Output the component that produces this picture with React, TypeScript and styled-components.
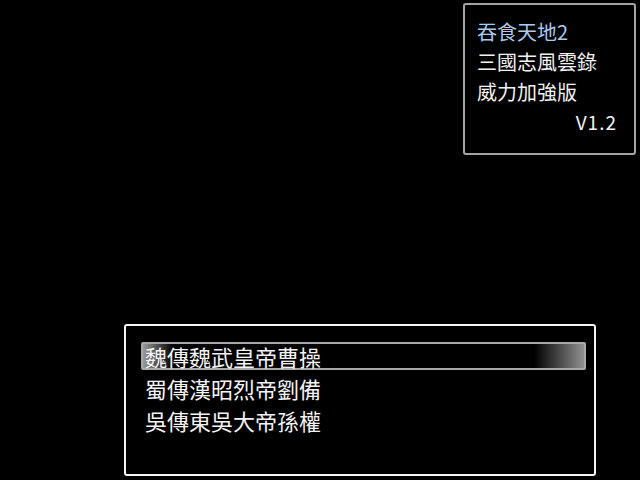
import React from "react";
import styled, { createGlobalStyle } from "styled-components";

const GlobalStyle = createGlobalStyle`
  html, body {
    margin: 0;
    padding: 0;
    background: #000;
  }
  body {
    font-family: "Noto Sans CJK TC", "Noto Sans CJK SC", sans-serif;
  }
`;

const Screen = styled.div`
  width: 640px;
  height: 480px;
  background: #000;
  display: flex;
  flex-direction: column;
  overflow: hidden;
`;

const TopRow = styled.div`
  display: flex;
  justify-content: flex-end;
  padding: 3px 4px 0 0;
`;

const InfoBox = styled.div`
  width: 173px;
  height: 152px;
  box-sizing: border-box;
  border: 2px solid #a4a4a4;
  border-radius: 3px;
  padding: 12px 20px 0 12px;
`;

const InfoLine = styled.div<{ $accent?: boolean; $right?: boolean }>`
  height: 30px;
  line-height: 30px;
  font-size: 20px;
  color: ${(p) => (p.$accent ? "#a8ccf0" : "#f2f2f2")};
  text-align: ${(p) => (p.$right ? "right" : "left")};
  white-space: nowrap;
`;

const Version = styled(InfoLine)`
  font-size: 19px;
  letter-spacing: 1px;
  margin-right: -3px;
`;

const MenuBox = styled.div`
  margin: 169px 0 0 124px;
  width: 472px;
  height: 152px;
  box-sizing: border-box;
  border: 2px solid #f4f4f4;
  border-radius: 3px;
  padding: 14px 8px 0 15px;
  display: flex;
  flex-direction: column;
`;

const Row = styled.div`
  height: 32px;
  display: flex;
  align-items: center;
`;

const Item = styled.div<{ $selected?: boolean }>`
  flex: 1;
  height: 28px;
  box-sizing: border-box;
  display: flex;
  align-items: center;
  padding-left: 2px;
  border: 2px solid ${(p) => (p.$selected ? "#a8a8a8" : "transparent")};
  border-radius: 2px;
  background: ${(p) =>
    p.$selected
      ? "linear-gradient(to right, #9a9a9a 0px, #000 30px, #000 calc(100% - 50px), #909090 100%)"
      : "transparent"};
  font-size: 22px;
  color: #f4f4f4;
  white-space: nowrap;
`;

const info = ["三國志風雲錄", "威力加強版"];
const items = ["魏傳魏武皇帝曹操", "蜀傳漢昭烈帝劉備", "吳傳東吳大帝孫權"];

export default function App() {
  return (
    <Screen>
      <GlobalStyle />
      <TopRow>
        <InfoBox>
          <InfoLine $accent>吞食天地2</InfoLine>
          {info.map((t) => (
            <InfoLine key={t}>{t}</InfoLine>
          ))}
          <Version $right>V1.2</Version>
        </InfoBox>
      </TopRow>
      <MenuBox>
        {items.map((t, i) => (
          <Row key={t}>
            <Item $selected={i === 0}>{t}</Item>
          </Row>
        ))}
      </MenuBox>
    </Screen>
  );
}
